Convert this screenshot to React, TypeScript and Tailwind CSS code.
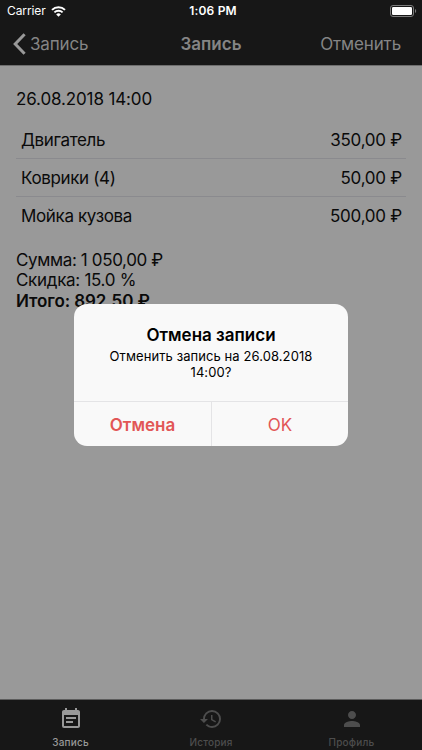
import { MdEventNote, MdHistory, MdPerson } from "react-icons/md"

const services = [
  { name: "Двигатель", price: "350,00 ₽" },
  { name: "Коврики (4)", price: "50,00 ₽" },
  { name: "Мойка кузова", price: "500,00 ₽" },
]

const tabs = [
  { label: "Запись", icon: MdEventNote, active: true },
  { label: "История", icon: MdHistory, active: false },
  { label: "Профиль", icon: MdPerson, active: false },
]

function StatusBar() {
  return (
    <div className="grid h-[22px] grid-cols-3 items-center pl-[7px] pr-[5px] text-[12px] text-white">
      <div className="flex items-center gap-[5px]">
        <span className="-tracking-[0.1px]">Carrier</span>
        <svg width="15" height="11" viewBox="0 0 15 11" fill="none">
          <path d="M1 3.9a9.3 9.3 0 0 1 13 0" stroke="currentColor" strokeWidth="2" />
          <path d="M3.4 6.4a5.8 5.8 0 0 1 8.2 0" stroke="currentColor" strokeWidth="1.9" />
          <path d="M7.5 10.8 5.2 8.4a3.3 3.3 0 0 1 4.6 0z" fill="currentColor" />
        </svg>
      </div>
      <span className="pl-0.5 text-center font-semibold tracking-[0.2px]">1:06 PM</span>
      <svg className="justify-self-end" width="27" height="12" viewBox="0 0 27 12" fill="none">
        <rect x="0.5" y="0.5" width="23" height="11" rx="2.5" stroke="#7c7c7c" />
        <rect x="2" y="2" width="20" height="8" rx="1.2" fill="white" />
        <path d="M25 4c1.6.6 1.6 3.4 0 4z" fill="#7c7c7c" />
      </svg>
    </div>
  )
}

function NavBar() {
  return (
    <header className="grid h-[43px] grid-cols-3 items-center pl-3 pr-[21px] text-[17px] text-[#858585]">
      <div className="flex items-center gap-1">
        <svg width="14" height="22" viewBox="0 0 14 22" fill="none">
          <path d="M12.6 1.3 3.2 11l9.4 9.7" stroke="#999" strokeWidth="3" />
        </svg>
        <span className="pt-0.5 -tracking-[0.15px]">Запись</span>
      </div>
      <h1 className="pl-[9px] pt-0.5 text-center font-semibold">Запись</h1>
      <span className="justify-self-end pt-0.5 -tracking-[0.15px]">Отменить</span>
    </header>
  )
}

function CancelDialog() {
  return (
    <div className="absolute left-[74px] top-[304px] flex h-[142px] w-[274px] flex-col overflow-hidden rounded-[13px] bg-[#f9f9f9]">
      <div className="flex-1 pt-5 text-center">
        <h2 className="text-[17px] font-semibold leading-[22px]">Отмена записи</h2>
        <p className="mx-auto mt-[2px] w-[220px] text-[13px] leading-4 tracking-[0.08px]">
          Отменить запись на 26.08.2018 14:00?
        </p>
      </div>
      <div className="grid h-[45px] grid-cols-[138px_1fr] border-t border-[#e4e4e6] text-[17px] text-[#e25656]">
        <button className="border-r border-[#e4e4e6] pt-[3px] font-semibold">Отмена</button>
        <button className="pt-[3px]">OK</button>
      </div>
    </div>
  )
}

export default function App() {
  return (
    <div className="relative flex h-[750px] w-[422px] flex-col overflow-hidden bg-[#999] font-['Inter','Liberation_Sans',sans-serif] text-black">
      <div className="border-b border-[#6e6e6e] bg-[#171717]">
        <StatusBar />
        <NavBar />
      </div>

      <main className="flex-1 px-4 pt-[23px] text-[17px] -tracking-[0.36px] text-[#0a0a0a]">
        <p className="leading-[21px] -tracking-[0.13px]">26.08.2018 14:00</p>
        <ul className="mt-[11.5px] divide-y divide-[#8a8a8e]">
          {services.map((item) => (
            <li key={item.name} className="flex h-[37.5px] items-center justify-between pl-[5px] pr-1 pt-[2px]">
              <span>{item.name}</span>
              <span className="-tracking-[0.25px]">{item.price}</span>
            </li>
          ))}
        </ul>
        <div className="mt-[15.5px] leading-[20.7px]">
          <p>Сумма: 1 050,00 ₽</p>
          <p className="-tracking-[0.3px]">Скидка: 15.0 %</p>
          <p className="font-semibold -tracking-[0.08px]">Итого: 892,50 ₽</p>
        </div>
      </main>

      <nav className="grid h-[51px] grid-cols-[141px_140px_141px] border-t border-[#5c5c5c] bg-[#171717]">
        {tabs.map(({ label, icon: Icon, active }) => (
          <div
            key={label}
            className={`flex flex-col items-center pt-[7px] text-[10px] font-medium tracking-[0.2px] ${active ? "text-[#999]" : "text-[#4d4d4d]"}`}
          >
            <Icon size={24} />
            <span className="mt-[4px] leading-[14px]">{label}</span>
          </div>
        ))}
      </nav>

      <CancelDialog />
    </div>
  )
}
